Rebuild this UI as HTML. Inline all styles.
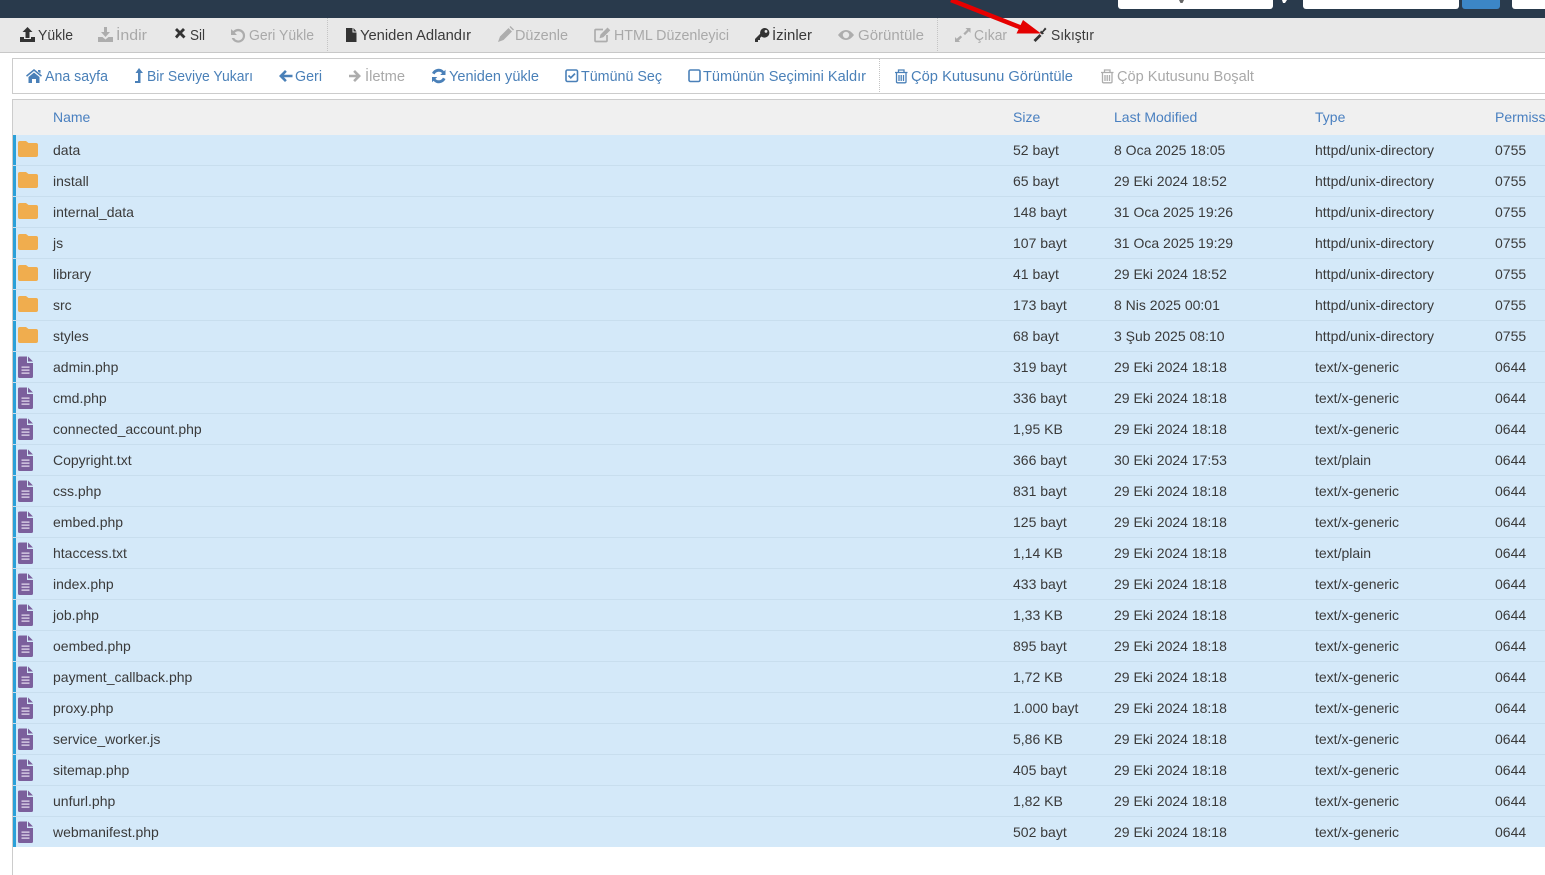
<!DOCTYPE html>
<html lang="tr">
<head>
<meta charset="utf-8">
<title>File Manager</title>
<style>
html,body{margin:0;padding:0;background:#fff;width:1545px;height:875px;overflow:hidden}
body{position:relative;font-family:"Liberation Sans",Arial,sans-serif;font-size:14px;color:#3a3a3a}
.abs{position:absolute}
#t{position:absolute;left:13px;top:135px;width:1532px}
.r{position:relative;height:30px;line-height:30px;background:#d4e9f9;border-bottom:1px solid #c8deee;white-space:nowrap}
.r:last-child{border-bottom:0;height:30px}
.r:before{content:"";position:absolute;left:0;top:0;bottom:0;width:3px;background:#2aa0d8}
.r svg{position:absolute;left:4px;top:0;width:28px;height:30px}
.r span{position:absolute;top:0}
.a{left:40px}.b{left:1000px}.c{left:1101px}.d{left:1302px}.e{left:1482px}
</style>
</head>
<body>
<div class="abs" style="left:0;top:0;width:1545px;height:18px;background:#293a4c"></div>
<div class="abs" style="left:1118px;top:0;width:155px;height:9px;background:#fff;border-radius:0 0 3px 3px"></div>
<div class="abs" style="left:1303px;top:0;width:156px;height:9px;background:#fff;border-radius:0 0 3px 3px"></div>
<div class="abs" style="left:1462px;top:0;width:38px;height:9px;background:#3c86c6;border-radius:0 0 3px 3px"></div>
<div class="abs" style="left:1512px;top:0;width:33px;height:9px;background:#fff;border-radius:0 0 0 3px"></div>
<div class="abs" style="left:0;top:18px;width:1545px;height:34px;background:#e8e8e8;border-bottom:1px solid #c8c8c8"></div>
<div class="abs" style="left:12px;top:58px;width:1533px;height:34px;background:#fff;border:1px solid #ccc;border-right:0"></div>
<div class="abs" style="left:12px;top:99px;width:1533px;height:35px;background:#f0f0f0;border-top:1px solid #ccc;border-left:1px solid #ccc;border-bottom:1px solid #ddd"></div>
<div class="abs" style="left:12px;top:135px;width:1px;height:740px;background:#ccc"></div>

<svg class="abs" style="left:0;top:0" width="1545" height="135" viewBox="0 0 1545 135" font-family="'Liberation Sans',sans-serif" font-size="15">
<g stroke="#c4c4c4" stroke-dasharray="1 1"><path d="M327.500 18V52M937.500 18V52"/></g>
<path d="M879.500 59V93" stroke="#c4c4c4" stroke-dasharray="1 1"/>

<!-- toolbar 1 text -->
<g fill="#3a3a3a">
<text x="38" y="40" textLength="35" lengthAdjust="spacingAndGlyphs">Yükle</text>
<text x="190" y="40" textLength="15" lengthAdjust="spacingAndGlyphs">Sil</text>
<text x="360" y="40" textLength="111" lengthAdjust="spacingAndGlyphs">Yeniden Adlandır</text>
<text x="772" y="40" textLength="40" lengthAdjust="spacingAndGlyphs">İzinler</text>
<text x="1051" y="40" textLength="43" lengthAdjust="spacingAndGlyphs">Sıkıştır</text>
</g>
<g fill="#a9a9a9">
<text x="116" y="40" textLength="31" lengthAdjust="spacingAndGlyphs">İndir</text>
<text x="249" y="40" textLength="65" lengthAdjust="spacingAndGlyphs">Geri Yükle</text>
<text x="515" y="40" textLength="53" lengthAdjust="spacingAndGlyphs">Düzenle</text>
<text x="614" y="40" textLength="115" lengthAdjust="spacingAndGlyphs">HTML Düzenleyici</text>
<text x="858" y="40" textLength="66" lengthAdjust="spacingAndGlyphs">Görüntüle</text>
<text x="974" y="40" textLength="33" lengthAdjust="spacingAndGlyphs">Çıkar</text>
</g>
<!-- toolbar 2 text -->
<g fill="#4a80b8">
<text x="45" y="81" textLength="63" lengthAdjust="spacingAndGlyphs">Ana sayfa</text>
<text x="147" y="81" textLength="106" lengthAdjust="spacingAndGlyphs">Bir Seviye Yukarı</text>
<text x="295" y="81" textLength="27" lengthAdjust="spacingAndGlyphs">Geri</text>
<text x="449" y="81" textLength="90" lengthAdjust="spacingAndGlyphs">Yeniden yükle</text>
<text x="581" y="81" textLength="81" lengthAdjust="spacingAndGlyphs">Tümünü Seç</text>
<text x="703" y="81" textLength="163" lengthAdjust="spacingAndGlyphs">Tümünün Seçimini Kaldır</text>
<text x="911" y="81" textLength="162" lengthAdjust="spacingAndGlyphs">Çöp Kutusunu Görüntüle</text>
</g>
<g fill="#a9a9a9">
<text x="365" y="81" textLength="40" lengthAdjust="spacingAndGlyphs">İletme</text>
<text x="1117" y="81" textLength="137" lengthAdjust="spacingAndGlyphs">Çöp Kutusunu Boşalt</text>
</g>
<!-- header text -->
<g fill="#4a80c0" font-size="14">
<text x="53" y="122">Name</text>
<text x="1013" y="122">Size</text>
<text x="1114" y="122">Last Modified</text>
<text x="1315" y="122">Type</text>
<text x="1495" y="122">Permiss</text>
</g>

<!-- toolbar 1 icons -->
<g fill="#333">
<path d="M27.500 27l5 5h-3v6h-4v-6h-3zM20 37h4v2h7v-2h4v5H20z"/>
<path d="M175 30l2-2 3 3 3-3 2 2-3 3 3.500 3.500-2 2-3.500-3.500-3 3.500-2-2 3-3.500z"/>
<path d="M346 28h6.500v4.500h4V42H346zM353.500 28l3 3.500h-3z"/>
<path d="M764.500 28a4.800 4.800 0 1 1-3 8.500L760 38v2h-2v2h-3v-3l5.200-5.200A4.800 4.800 0 0 1 764.500 28zm1.500 2a1.400 1.400 0 1 0 0 2.800 1.400 1.400 0 0 0 0-2.800z"/>
<path d="M1045 27.500l1.500 1.500-3.500 3.500 1 1-2 1-2-2 1-2 1 1zM1039.500 34l2 2-6 6-2-2z"/>
</g>
<g fill="#adadad">
<path d="M104 27h3v5h3l-4.500 5-4.500-5h3zM98 37h4.500l3 2.500 3-2.500H113v5H98z"/>
<path d="M231 29v6h6l-2.200-2.200a4.600 4.600 0 1 1-.6 5.200h-2.500a6.900 6.900 0 1 0 1.500-7z"/>
<path d="M508.500 28l3.500 3.500-8.500 8.500-5.500 2 2-5.500zM509.500 27l1-1 3.500 3.500-1 1z"/>
<path fill-rule="evenodd" d="M838 35c2.500-3.200 5-5 8-5s5.500 1.800 8 5c-2.500 3.200-5 5-8 5s-5.500-1.800-8-5zm8-3.200a3.200 3.200 0 1 0 0 6.400 3.200 3.200 0 0 0 0-6.400z"/>
<path d="M965.500 28h5v5l-1.700-1.700-3.800 3.800-1.600-1.600 3.800-3.800zM960.500 35.500l1.600 1.600-3.500 3.500 1.600 1.400H955v-5l1.700 1.700z"/>
</g>
<g fill="none" stroke="#adadad" stroke-width="1.700">
<path d="M607 35v5.500a1 1 0 0 1-1 1h-10a1 1 0 0 1-1-1v-10a1 1 0 0 1 1-1h7"/>
</g>
<path d="M607.500 27.500l2.800 2.800-7 7-3.800 1 1-3.800z" fill="#adadad"/>

<!-- toolbar 2 icons -->
<g fill="#4a80b8">
<path d="M34 69l8 6.500-1 1.200-7-5.700-7 5.700-1-1.200zM38 70h2.500v3.500L38 71.500zM28.500 77l5.500-4.500 5.500 4.500v6H36v-4h-4v4h-3.500z"/>
<path d="M139 68l4 5h-2.500v10H135v-2h3V73h-2.500z"/>
<path d="M279 76l6-6 1.800 1.800-2.800 2.900h8.500v2.600H284l2.800 2.900L285 82z"/>
<path d="M432 73a7.200 7.200 0 0 1 12-1.800l1.500-1.500V75h-5.300l1.900-1.900a4.600 4.600 0 0 0-7.500 1.300zM445.500 79a7.200 7.200 0 0 1-12 1.800L432 82.300V77h5.300l-1.900 1.900a4.600 4.600 0 0 0 7.500-1.300z"/>
</g>
<g fill="none" stroke="#4a80b8" stroke-width="1.300">
<path d="M895 72.500h12.500M898.500 72.500v-2.500h5.500v2.500M896.500 73v8.800a1 1 0 0 0 1 1h7.500a1 1 0 0 0 1-1V73M899 75v6M901.200 75v6M903.500 75v6"/>
</g>
<g fill="none" stroke="#4a80b8" stroke-width="1.600">
<rect x="566" y="70" width="11.500" height="11.500" rx="1.500"/>
<path d="M568.500 75.500l2.300 2.300 4.200-4.200" stroke-width="1.700"/>
<rect x="689" y="70" width="11" height="11.500" rx="1.500"/>
</g>
<g fill="#adadad">
<path d="M361 76l-6-6-1.800 1.800 2.800 2.900H349v2.600h7l-2.800 2.900L355 82z"/>
</g>
<g fill="none" stroke="#adadad" stroke-width="1.300">
<path d="M1101 72.500h12.500M1104.500 72.500v-2.500h5.500v2.500M1102.500 73v8.800a1 1 0 0 0 1 1h7.500a1 1 0 0 0 1-1V73M1105 75v6M1107.200 75v6M1109.500 75v6"/>
</g>

<!-- red arrow -->
<path d="M951 0L1022 28" stroke="#e60000" stroke-width="4.500" fill="none"/>
<path d="M1023 20L1041 33.500 1016.500 33.500z" fill="#e40000"/>
<path d="M1179 0h5l-1.500 3h-2z" fill="#666"/>
<path d="M1282 0h5l-2 3h-2z" fill="#fff"/>
</svg>

<svg width="0" height="0" style="position:absolute">
<defs>
<symbol id="fo" viewBox="0 0 28 30"><path d="M1 8a2 2 0 0 1 2-2h6l2.500 2h7.500a2 2 0 0 1 2 2v10a2 2 0 0 1-2 2H3a2 2 0 0 1-2-2z" fill="#f0ad4e"/></symbol>
<symbol id="fi" viewBox="0 0 28 30"><path d="M1 6a1.500 1.500 0 0 1 1.500-1.500H10V11h6v13.500a1.500 1.500 0 0 1-1.500 1.500h-12A1.500 1.500 0 0 1 1 24.500z" fill="#7b5f9c"/><path d="M11 4.500l5 5h-5z" fill="#7b5f9c"/><path d="M4.500 14.500h8v1.300h-8zM4.500 17.500h8v1.300h-8zM4.500 20.500h8v1.300h-8z" fill="#e4dcef"/></symbol>
</defs>
</svg>

<div id="t">
<div class="r"><svg><use href="#fo"/></svg><span class="a">data</span><span class="b">52 bayt</span><span class="c">8 Oca 2025 18:05</span><span class="d">httpd/unix-directory</span><span class="e">0755</span></div>
<div class="r"><svg><use href="#fo"/></svg><span class="a">install</span><span class="b">65 bayt</span><span class="c">29 Eki 2024 18:52</span><span class="d">httpd/unix-directory</span><span class="e">0755</span></div>
<div class="r"><svg><use href="#fo"/></svg><span class="a">internal_data</span><span class="b">148 bayt</span><span class="c">31 Oca 2025 19:26</span><span class="d">httpd/unix-directory</span><span class="e">0755</span></div>
<div class="r"><svg><use href="#fo"/></svg><span class="a">js</span><span class="b">107 bayt</span><span class="c">31 Oca 2025 19:29</span><span class="d">httpd/unix-directory</span><span class="e">0755</span></div>
<div class="r"><svg><use href="#fo"/></svg><span class="a">library</span><span class="b">41 bayt</span><span class="c">29 Eki 2024 18:52</span><span class="d">httpd/unix-directory</span><span class="e">0755</span></div>
<div class="r"><svg><use href="#fo"/></svg><span class="a">src</span><span class="b">173 bayt</span><span class="c">8 Nis 2025 00:01</span><span class="d">httpd/unix-directory</span><span class="e">0755</span></div>
<div class="r"><svg><use href="#fo"/></svg><span class="a">styles</span><span class="b">68 bayt</span><span class="c">3 Şub 2025 08:10</span><span class="d">httpd/unix-directory</span><span class="e">0755</span></div>
<div class="r"><svg><use href="#fi"/></svg><span class="a">admin.php</span><span class="b">319 bayt</span><span class="c">29 Eki 2024 18:18</span><span class="d">text/x-generic</span><span class="e">0644</span></div>
<div class="r"><svg><use href="#fi"/></svg><span class="a">cmd.php</span><span class="b">336 bayt</span><span class="c">29 Eki 2024 18:18</span><span class="d">text/x-generic</span><span class="e">0644</span></div>
<div class="r"><svg><use href="#fi"/></svg><span class="a">connected_account.php</span><span class="b">1,95 KB</span><span class="c">29 Eki 2024 18:18</span><span class="d">text/x-generic</span><span class="e">0644</span></div>
<div class="r"><svg><use href="#fi"/></svg><span class="a">Copyright.txt</span><span class="b">366 bayt</span><span class="c">30 Eki 2024 17:53</span><span class="d">text/plain</span><span class="e">0644</span></div>
<div class="r"><svg><use href="#fi"/></svg><span class="a">css.php</span><span class="b">831 bayt</span><span class="c">29 Eki 2024 18:18</span><span class="d">text/x-generic</span><span class="e">0644</span></div>
<div class="r"><svg><use href="#fi"/></svg><span class="a">embed.php</span><span class="b">125 bayt</span><span class="c">29 Eki 2024 18:18</span><span class="d">text/x-generic</span><span class="e">0644</span></div>
<div class="r"><svg><use href="#fi"/></svg><span class="a">htaccess.txt</span><span class="b">1,14 KB</span><span class="c">29 Eki 2024 18:18</span><span class="d">text/plain</span><span class="e">0644</span></div>
<div class="r"><svg><use href="#fi"/></svg><span class="a">index.php</span><span class="b">433 bayt</span><span class="c">29 Eki 2024 18:18</span><span class="d">text/x-generic</span><span class="e">0644</span></div>
<div class="r"><svg><use href="#fi"/></svg><span class="a">job.php</span><span class="b">1,33 KB</span><span class="c">29 Eki 2024 18:18</span><span class="d">text/x-generic</span><span class="e">0644</span></div>
<div class="r"><svg><use href="#fi"/></svg><span class="a">oembed.php</span><span class="b">895 bayt</span><span class="c">29 Eki 2024 18:18</span><span class="d">text/x-generic</span><span class="e">0644</span></div>
<div class="r"><svg><use href="#fi"/></svg><span class="a">payment_callback.php</span><span class="b">1,72 KB</span><span class="c">29 Eki 2024 18:18</span><span class="d">text/x-generic</span><span class="e">0644</span></div>
<div class="r"><svg><use href="#fi"/></svg><span class="a">proxy.php</span><span class="b">1.000 bayt</span><span class="c">29 Eki 2024 18:18</span><span class="d">text/x-generic</span><span class="e">0644</span></div>
<div class="r"><svg><use href="#fi"/></svg><span class="a">service_worker.js</span><span class="b">5,86 KB</span><span class="c">29 Eki 2024 18:18</span><span class="d">text/x-generic</span><span class="e">0644</span></div>
<div class="r"><svg><use href="#fi"/></svg><span class="a">sitemap.php</span><span class="b">405 bayt</span><span class="c">29 Eki 2024 18:18</span><span class="d">text/x-generic</span><span class="e">0644</span></div>
<div class="r"><svg><use href="#fi"/></svg><span class="a">unfurl.php</span><span class="b">1,82 KB</span><span class="c">29 Eki 2024 18:18</span><span class="d">text/x-generic</span><span class="e">0644</span></div>
<div class="r"><svg><use href="#fi"/></svg><span class="a">webmanifest.php</span><span class="b">502 bayt</span><span class="c">29 Eki 2024 18:18</span><span class="d">text/x-generic</span><span class="e">0644</span></div>
</div>
</body>
</html>
